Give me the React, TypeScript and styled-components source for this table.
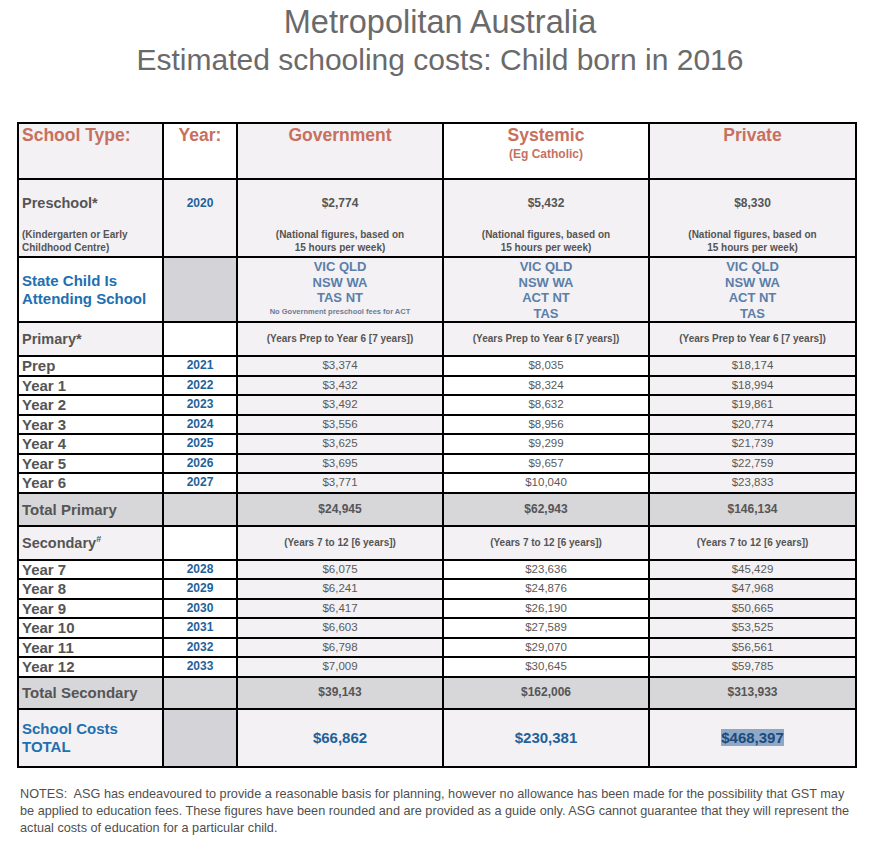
import React from "react";
import styled, { createGlobalStyle } from "styled-components";

type Bg = "white" | "tint" | "grey" | "total";

const bgColors: Record<Bg, string> = {
  white: "#ffffff",
  tint: "#f3f1f4",
  grey: "#d4d3d8",
  total: "#d7d6d9",
};

const salmon = "#c8705e";
const blue = "#1f6299";
const slate = "#5b7fa8";
const ink = "#555555";

const primary = [
  ["Prep", "2021", "$3,374", "$8,035", "$18,174"],
  ["Year 1", "2022", "$3,432", "$8,324", "$18,994"],
  ["Year 2", "2023", "$3,492", "$8,632", "$19,861"],
  ["Year 3", "2024", "$3,556", "$8,956", "$20,774"],
  ["Year 4", "2025", "$3,625", "$9,299", "$21,739"],
  ["Year 5", "2026", "$3,695", "$9,657", "$22,759"],
  ["Year 6", "2027", "$3,771", "$10,040", "$23,833"],
];

const secondary = [
  ["Year 7", "2028", "$6,075", "$23,636", "$45,429"],
  ["Year 8", "2029", "$6,241", "$24,876", "$47,968"],
  ["Year 9", "2030", "$6,417", "$26,190", "$50,665"],
  ["Year 10", "2031", "$6,603", "$27,589", "$53,525"],
  ["Year 11", "2032", "$6,798", "$29,070", "$56,561"],
  ["Year 12", "2033", "$7,009", "$30,645", "$59,785"],
];

const dataBgs: Bg[] = ["tint", "white", "tint"];

function App() {
  return (
    <>
      <GlobalStyle />
      <Page>
        <Heading>
          <TitleMain>Metropolitan Australia</TitleMain>
          <TitleSub>Estimated schooling costs: Child born in 2016</TitleSub>
        </Heading>

        <Table>
          <colgroup>
            <col style={{ width: 145 }} />
            <col style={{ width: 74 }} />
            <col style={{ width: 206 }} />
            <col style={{ width: 206 }} />
            <col style={{ width: 207 }} />
          </colgroup>
          <tbody>
            <Row $h={56}>
              <Cell $bg="tint" $valign="top">
                <HeadText>School Type:</HeadText>
              </Cell>
              <Cell $bg="white" $align="center" $valign="top">
                <HeadText>Year:</HeadText>
              </Cell>
              <Cell $bg="tint" $align="center" $valign="top">
                <HeadText>Government</HeadText>
              </Cell>
              <Cell $bg="white" $align="center" $valign="top">
                <HeadText>Systemic</HeadText>
                <HeadNote>(Eg Catholic)</HeadNote>
              </Cell>
              <Cell $bg="tint" $align="center" $valign="top">
                <HeadText>Private</HeadText>
              </Cell>
            </Row>

            <Row $h={78}>
              <Cell $bg="tint" $valign="top">
                <PreschoolLabel>Preschool*</PreschoolLabel>
                <SmallNote $align="left">
                  (Kindergarten or Early
                  <br />
                  Childhood Centre)
                </SmallNote>
              </Cell>
              <Cell $bg="tint" $align="center" $valign="top">
                <PreschoolYear>2020</PreschoolYear>
              </Cell>
              {["$2,774", "$5,432", "$8,330"].map((v) => (
                <Cell key={v} $bg="tint" $align="center" $valign="top">
                  <PreschoolAmount>{v}</PreschoolAmount>
                  <SmallNote $align="center">
                    (National figures, based on
                    <br />
                    15 hours per week)
                  </SmallNote>
                </Cell>
              ))}
            </Row>

            <Row $h={64}>
              <Cell $bg="white">
                <BlueLabel>
                  State Child Is
                  <br />
                  Attending School
                </BlueLabel>
              </Cell>
              <Cell $bg="grey" />
              <Cell $bg="tint" $align="center" $valign="top">
                <States>
                  VIC QLD
                  <br />
                  NSW WA
                  <br />
                  TAS NT
                </States>
                <TinyNote>No Government preschool fees for ACT</TinyNote>
              </Cell>
              {["sys", "priv"].map((k) => (
                <Cell key={k} $bg="tint" $align="center" $valign="top">
                  <States>
                    VIC QLD
                    <br />
                    NSW WA
                    <br />
                    ACT NT
                    <br />
                    TAS
                  </States>
                </Cell>
              ))}
            </Row>

            <SectionRow label="Primary*" note="(Years Prep to Year 6 [7 years])" h={34} />
            {primary.map((r) => (
              <DataRow key={r[0]} values={r} />
            ))}
            <TotalRow label="Total Primary" values={["$24,945", "$62,943", "$146,134"]} h={33} />

            <SectionRow label="Secondary" sup="#" note="(Years 7 to 12 [6 years])" h={34} />
            {secondary.map((r) => (
              <DataRow key={r[0]} values={r} />
            ))}
            <TotalRow label="Total Secondary" values={["$39,143", "$162,006", "$313,933"]} h={32} />

            <Row $h={58}>
              <Cell $bg="tint">
                <BlueLabel>
                  School Costs
                  <br />
                  TOTAL
                </BlueLabel>
              </Cell>
              <Cell $bg="grey" />
              <Cell $bg="tint" $align="center">
                <GrandTotal>$66,862</GrandTotal>
              </Cell>
              <Cell $bg="tint" $align="center">
                <GrandTotal>$230,381</GrandTotal>
              </Cell>
              <Cell $bg="tint" $align="center">
                <GrandTotal>
                  <Selected>$468,397</Selected>
                </GrandTotal>
              </Cell>
            </Row>
          </tbody>
        </Table>

        <Notes>
          NOTES:&nbsp; ASG has endeavoured to provide a reasonable basis for planning, however no allowance has been made
          for the possibility that GST may
          <br />
          be applied to education fees. These figures have been rounded and are provided as a guide only. ASG cannot
          guarantee that they will represent the
          <br />
          actual costs of education for a particular child.
        </Notes>
      </Page>
    </>
  );
}

function SectionRow({ label, sup, note, h }: { label: string; sup?: string; note: string; h: number }) {
  return (
    <Row $h={h}>
      <Cell $bg="tint">
        <SectionLabel>
          {label}
          {sup && <Sup>{sup}</Sup>}
        </SectionLabel>
      </Cell>
      <Cell $bg="white" />
      {[0, 1, 2].map((i) => (
        <Cell key={i} $bg="tint" $align="center">
          <BracketNote>{note}</BracketNote>
        </Cell>
      ))}
    </Row>
  );
}

function DataRow({ values }: { values: string[] }) {
  const [label, year, ...amounts] = values;
  return (
    <Row $h={19.5}>
      <Cell $bg="white">
        <RowLabel>{label}</RowLabel>
      </Cell>
      <Cell $bg="white" $align="center">
        <YearText>{year}</YearText>
      </Cell>
      {amounts.map((a, i) => (
        <Cell key={i} $bg={dataBgs[i]} $align="center">
          <Amount>{a}</Amount>
        </Cell>
      ))}
    </Row>
  );
}

function TotalRow({ label, values, h }: { label: string; values: string[]; h: number }) {
  return (
    <Row $h={h}>
      <Cell $bg="total">
        <RowLabel>{label}</RowLabel>
      </Cell>
      <Cell $bg="total" />
      {values.map((v) => (
        <Cell key={v} $bg="total" $align="center">
          <TotalAmount>{v}</TotalAmount>
        </Cell>
      ))}
    </Row>
  );
}

const GlobalStyle = createGlobalStyle`
  html, body {
    margin: 0;
    background: #ffffff;
    font-family: "Liberation Sans", Arial, sans-serif;
  }
`;

const Page = styled.div`
  width: 874px;
  padding-top: 3px;
`;

const Heading = styled.header`
  display: flex;
  flex-direction: column;
  align-items: center;
  color: #6a6a6a;
  margin-left: 6px;
`;

const TitleMain = styled.div`
  font-size: 32.5px;
  line-height: 38px;
`;

const TitleSub = styled.div`
  font-size: 30px;
  line-height: 38px;
`;

const Table = styled.table`
  margin: 43px 0 0 17px;
  width: 838px;
  table-layout: fixed;
  border-collapse: collapse;
  border: 2px solid #000;
`;

const Row = styled.tr<{ $h: number }>`
  height: ${({ $h }) => $h}px;
`;

const Cell = styled.td<{ $bg: Bg; $align?: "left" | "center"; $valign?: "top" | "middle" }>`
  border: 2px solid #000;
  padding: 0 3px;
  background: ${({ $bg }) => bgColors[$bg]};
  text-align: ${({ $align }) => $align || "left"};
  vertical-align: ${({ $valign }) => $valign || "middle"};
`;

const HeadText = styled.div`
  color: ${salmon};
  font-weight: 700;
  font-size: 17.5px;
  line-height: 22px;
`;

const HeadNote = styled.div`
  color: ${salmon};
  font-weight: 700;
  font-size: 12px;
  line-height: 16px;
`;

const PreschoolLabel = styled.div`
  color: ${ink};
  font-weight: 700;
  font-size: 14.5px;
  line-height: 18px;
  margin-top: 14px;
`;

const PreschoolYear = styled.div`
  color: ${blue};
  font-weight: 700;
  font-size: 12px;
  line-height: 18px;
  margin-top: 14px;
`;

const PreschoolAmount = styled(PreschoolYear)`
  color: ${ink};
`;

const SmallNote = styled.div<{ $align: "left" | "center" }>`
  color: ${ink};
  font-weight: 700;
  font-size: 10px;
  line-height: 13px;
  margin-top: 16px;
  text-align: ${({ $align }) => $align};
`;

const BlueLabel = styled.div`
  color: #2070b0;
  font-weight: 700;
  font-size: 15px;
  line-height: 18px;
`;

const States = styled.div`
  color: ${slate};
  font-weight: 700;
  font-size: 13px;
  line-height: 15.5px;
  margin-top: 1px;
`;

const TinyNote = styled.div`
  color: #6a7c94;
  font-weight: 700;
  font-size: 7.5px;
  line-height: 12px;
`;

const SectionLabel = styled.div`
  color: ${ink};
  font-weight: 700;
  font-size: 14.5px;
  line-height: 18px;
`;

const Sup = styled.sup`
  font-size: 9px;
  line-height: 0;
`;

const BracketNote = styled.div`
  color: ${ink};
  font-weight: 700;
  font-size: 10px;
  line-height: 14px;
`;

const RowLabel = styled.div`
  color: ${ink};
  font-weight: 700;
  font-size: 15px;
  line-height: 17px;
`;

const YearText = styled.div`
  color: ${blue};
  font-weight: 700;
  font-size: 12px;
  line-height: 15px;
`;

const Amount = styled.div`
  color: #5a5a5a;
  font-size: 11.5px;
  line-height: 15px;
`;

const TotalAmount = styled.div`
  color: ${ink};
  font-weight: 700;
  font-size: 12px;
  line-height: 15px;
`;

const GrandTotal = styled.div`
  color: ${blue};
  font-weight: 700;
  font-size: 15px;
  line-height: 18px;
`;

const Selected = styled.span`
  background: #8ea8c6;
  color: #1b4a7e;
`;

const Notes = styled.p`
  margin: 18px 0 0 20px;
  color: #4f4f4f;
  font-size: 12.7px;
  line-height: 17px;
  white-space: nowrap;
`;

export default App;
